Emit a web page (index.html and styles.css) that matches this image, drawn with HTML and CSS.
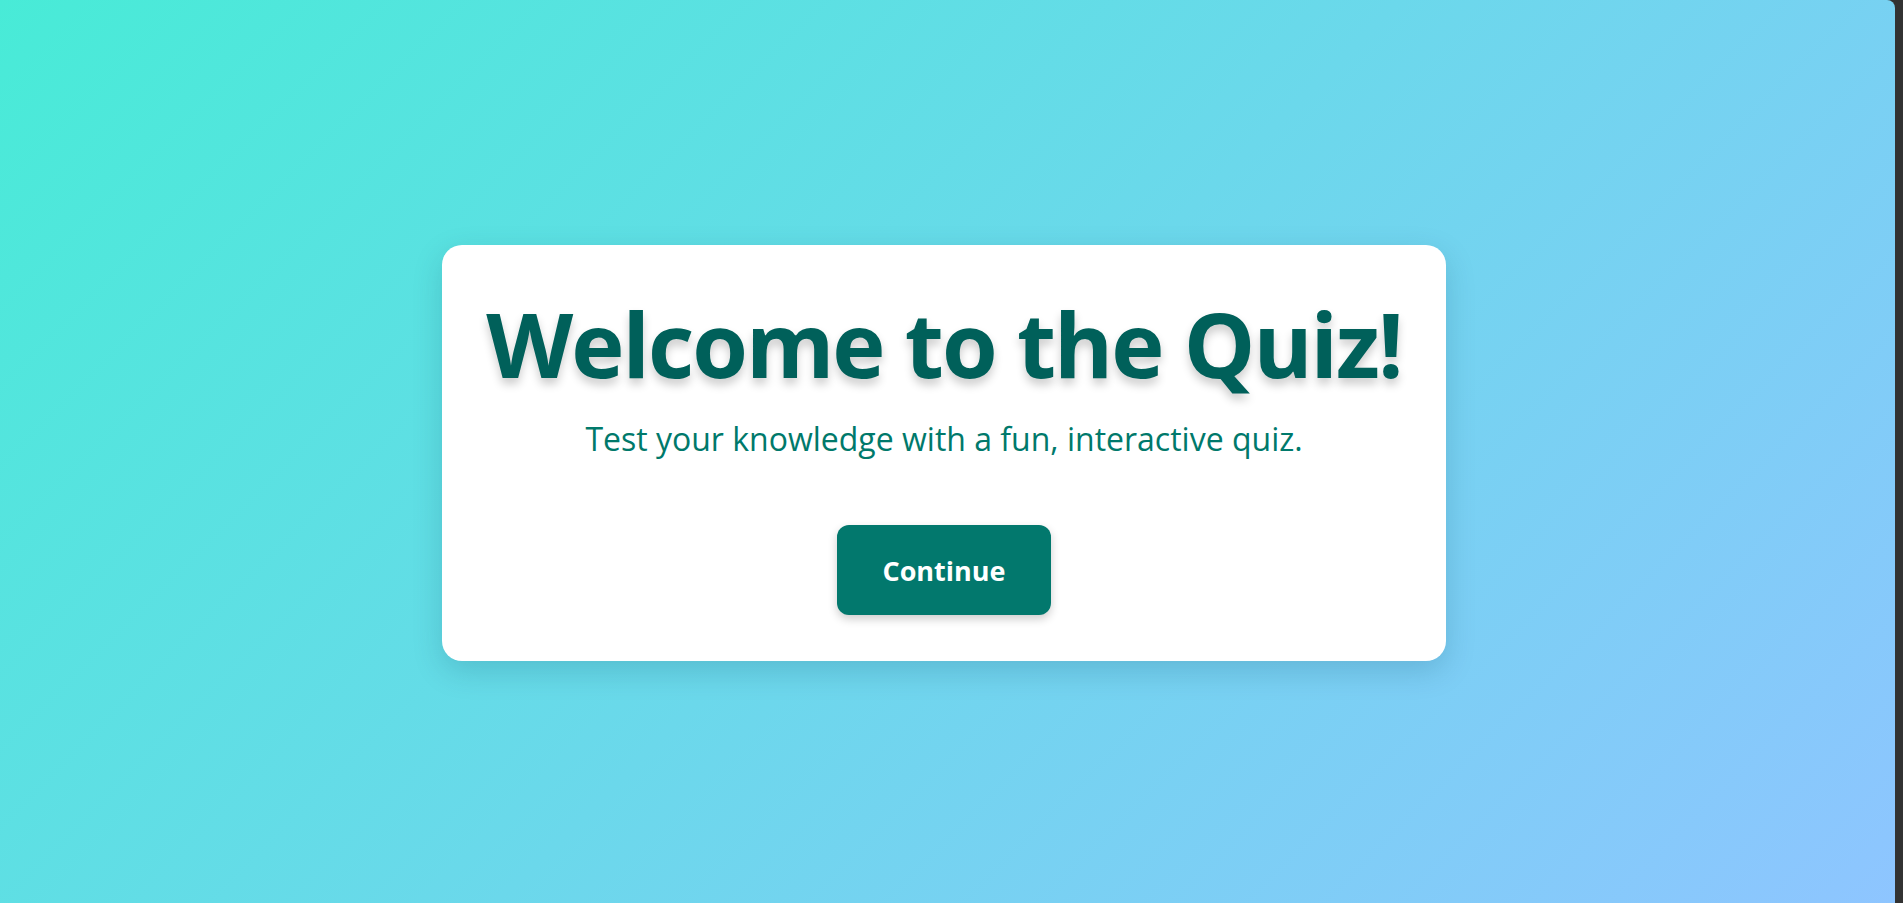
FILE: index.html
```html
<!DOCTYPE html>
<html lang="en">
<head>
<meta charset="utf-8">
<title>Quiz</title>
<link rel="stylesheet" href="styles.css">
</head>
<body>
<div class="page">
  <main class="card">
    <h1 class="title">Welcome to the Quiz!</h1>
    <p class="subtitle">Test your knowledge with a fun, interactive quiz.</p>
    <button class="btn" type="button">Continue</button>
  </main>
</div>
</body>
</html>
```
FILE: styles.css
```css
html, body {
  margin: 0;
  padding: 0;
  height: 100%;
  background: #323232;
}
body {
  font-family: "Open Sans", "Noto Sans", sans-serif;
}
.page {
  width: calc(100% - 8px);
  height: 100%;
  box-sizing: border-box;
  padding: 3px 7px 0 0;
  border-top-right-radius: 8px;
  background: linear-gradient(135deg, #48ebd7 0%, #8ec5ff 100%);
  display: flex;
  align-items: center;
  justify-content: center;
}
.card {
  width: 1004px;
  box-sizing: border-box;
  background: #fff;
  border-radius: 20px;
  box-shadow: 0 10px 30px rgba(0, 60, 90, 0.18);
  display: flex;
  flex-direction: column;
  align-items: center;
  padding: 44px 0 46px;
}
.title {
  margin: 0;
  font-size: 90px;
  letter-spacing: -2px;
  font-weight: 700;
  color: #00605a;
  line-height: 108px;
  text-shadow: 0 6px 10px rgba(0, 0, 0, 0.2);
}
.subtitle {
  margin: 21px 0 0;
  font-size: 32px;
  color: #00796b;
  line-height: 42px;
}
.btn {
  margin-top: 65px;
  width: 214px;
  height: 90px;
  border: none;
  border-radius: 12px;
  background: #02786d;
  color: #fff;
  font-family: inherit;
  font-size: 27px;
  font-weight: 700;
  box-shadow: 0 4px 10px rgba(0, 0, 0, 0.2);
  cursor: pointer;
}
```
